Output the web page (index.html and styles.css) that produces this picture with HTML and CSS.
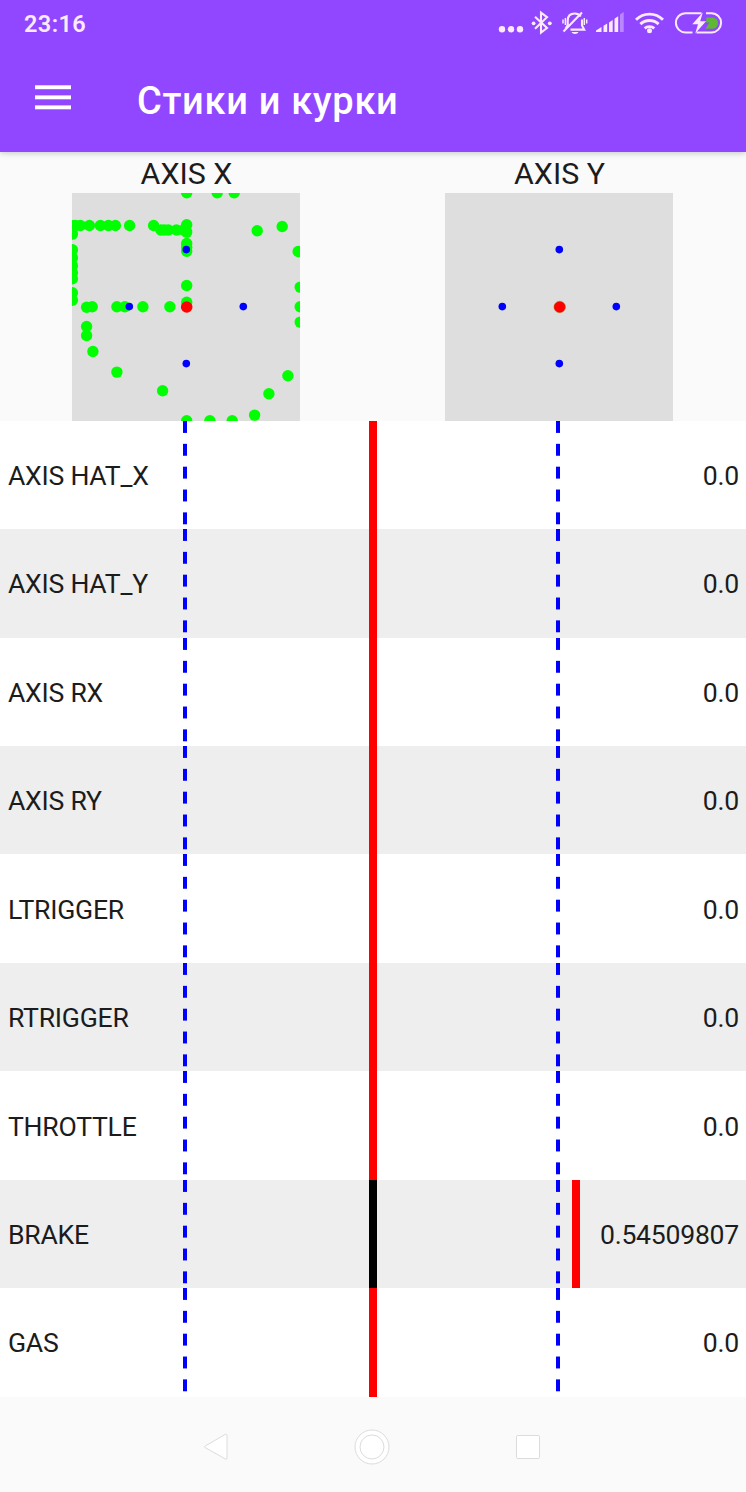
FILE: index.html
```html
<!DOCTYPE html>
<html lang="ru">
<head>
  <meta charset="UTF-8">
  <meta name="viewport" content="width=device-width, initial-scale=1.0">
  <title>Стики и курки</title>
  <link rel="stylesheet" href="styles.css">
</head>
<body>
  <header class="header">
    <div class="status-bar">
      <span class="clock">23:16</span>
      <svg class="status-icons" width="228" height="32" viewBox="496 7 228 32" fill="none" stroke="#fbe9ff">
        <g fill="#fbe9ff" stroke="none">
          <circle cx="502" cy="29.3" r="3.2"/>
          <circle cx="511" cy="29.3" r="3.2"/>
          <circle cx="520" cy="29.3" r="3.2"/>
        </g>
        <!-- bluetooth -->
        <path d="M535 16.7L547 28L541 32.7V12.7L547 17.2L535 28.8" stroke-width="2.1"/>
        <g fill="#fbe9ff" stroke="none">
          <circle cx="533.6" cy="23.3" r="1.9"/>
          <circle cx="549.8" cy="23.3" r="1.9"/>
        </g>
        <!-- muted bell -->
        <path d="M567.7 25V20.5C567.7 16 570.5 13.5 574.7 13.5C577.5 13.5 579.5 14.6 580.8 16.5M582 19.5V25.5L584.2 29.6H570.5M567.7 25L565.5 29M563.5 31.5L582 12.5" stroke-width="2.1"/>
        <path d="M565.4 18V25M563 19.5V23.5M584.3 18V25M586.7 19.5V23.5" stroke-width="1.5"/>
        <path d="M571.5 32H578.5C577.5 34.6 572.5 34.6 571.5 32Z" fill="#fbe9ff" stroke="none"/>
        <!-- mobile signal -->
        <g fill="#fbe9ff" stroke="none">
          <path d="M596 32V30.5L601.5 27V32Z"/>
          <path d="M603.5 32V25.8L607.2 23.5V32Z"/>
          <path d="M609 32V22.5L612.7 20V32Z"/>
          <path d="M614.5 32V18.7L618.2 16.2V32Z"/>
          <path d="M620 32V14.5L623.7 12V32Z" opacity="0.4"/>
        </g>
        <!-- wifi -->
        <g stroke-width="2.9">
          <path d="M636 19.7C643.5 12.2 655.5 12.2 663 19.7"/>
          <path d="M640.4 24.1C645.5 19.2 653.5 19.2 658.6 24.1"/>
          <path d="M644.7 28.4C647.3 26 651.7 26 654.3 28.4"/>
        </g>
        <circle cx="649.5" cy="30.7" r="2.5" fill="#fbe9ff" stroke="none"/>
        <!-- battery, charging -->
        <path d="M692.5 32.4H685.5A9.6 9.6 0 0 1 685.5 13.2H701.5M706 13.2H711.5A9.6 9.6 0 0 1 711.5 32.4H696.5" stroke-width="2"/>
        <path d="M706.5 17.5H713Q718 18.5 718 23Q718 27.5 713 28.8H705.5L709.5 22.5H706Z" fill="#5fb832" stroke="none"/>
        <path d="M702.8 12.5L692.2 24.3H698L695.2 33.5L706 21.2H700.2Z" fill="#fbe9ff" stroke="none"/>
      </svg>
    </div>
    <div class="toolbar">
      <svg class="menu-icon" width="36" height="25" viewBox="0 0 36 25" fill="#fff">
        <rect y="0.3" width="36" height="3.9"/>
        <rect y="10.4" width="36" height="3.9"/>
        <rect y="20.4" width="36" height="3.9"/>
      </svg>
      <h1 class="title">Стики и курки</h1>
    </div>
  </header>

  <main>
    <section class="sticks">
      <div class="stick">
        <h2 class="stick-name">AXIS X</h2>
        <svg class="pad" viewBox="-0.4 0.2 228 228">
          <g id="trail" fill="#00ff00"></g>
          <g fill="#0000ff">
            <circle cx="113.9" cy="56.8" r="3.8"/>
            <circle cx="56.9" cy="113.8" r="3.8"/>
            <circle cx="170.9" cy="113.8" r="3.8"/>
            <circle cx="113.9" cy="170.8" r="3.8"/>
          </g>
          <circle cx="114.3" cy="114.2" r="5.8" fill="#ff0000"/>
        </svg>
      </div>
      <div class="stick">
        <h2 class="stick-name">AXIS Y</h2>
        <svg class="pad" viewBox="-0.4 0.2 228 228">
          <g fill="#0000ff">
            <circle cx="113.9" cy="56.8" r="3.8"/>
            <circle cx="56.9" cy="113.8" r="3.8"/>
            <circle cx="170.9" cy="113.8" r="3.8"/>
            <circle cx="113.9" cy="170.8" r="3.8"/>
          </g>
          <circle cx="114.3" cy="114.2" r="5.8" fill="#ff0000" stroke="#8a7a00" stroke-width="0.4"/>
        </svg>
      </div>
    </section>

    <section class="axes">
      <div class="axis"><span>AXIS HAT_X</span><span>0.0</span><i class="marker"></i></div>
      <div class="axis"><span>AXIS HAT_Y</span><span>0.0</span><i class="marker"></i></div>
      <div class="axis"><span>AXIS RX</span><span>0.0</span><i class="marker"></i></div>
      <div class="axis"><span>AXIS RY</span><span>0.0</span><i class="marker"></i></div>
      <div class="axis"><span>LTRIGGER</span><span>0.0</span><i class="marker"></i></div>
      <div class="axis"><span>RTRIGGER</span><span>0.0</span><i class="marker"></i></div>
      <div class="axis"><span>THROTTLE</span><span>0.0</span><i class="marker"></i></div>
      <div class="axis"><span>BRAKE</span><span>0.54509807</span><i class="marker" style="left: 77.25%"></i></div>
      <div class="axis"><span>GAS</span><span>0.0</span><i class="marker"></i></div>
    </section>
  </main>

  <nav class="nav-bar">
    <svg width="26" height="30" viewBox="0 0 26 30"><path d="M2 14.1L22.5 2.3Q24 1.6 24 3.2V26.2Q24 27.8 22.5 27L2 15.5Q1 14.8 2 14.1Z"/></svg>
    <svg width="36" height="36" viewBox="0 0 36 36"><circle cx="18" cy="18" r="17"/><circle cx="18" cy="18" r="12"/></svg>
    <svg width="26" height="26" viewBox="0 0 26 26"><rect x="1.5" y="1.5" width="23" height="23" rx="1.2"/></svg>
  </nav>

  <script>
    // Recorded stick positions
    const points = [
      [3, 32.7], [8, 32.7], [17, 32.7], [28, 32.7], [36, 32.7], [43, 32.7], [57.2, 32.7], [81.2, 32.7],
      [88.5, 37.2], [92, 37.2], [96, 37.2], [104, 37.2], [111, 37.2],
      [0, 33], [0, 41.3], [0, 57], [0, 65], [0, 73], [0, 80], [0, 86], [0, 100], [0, 107.5],
      [14.2, 114.5], [19.8, 114], [44.5, 114], [52.5, 114], [70.5, 114], [97.5, 114],
      [14.2, 133.7], [14.2, 142.7], [20.5, 158.7], [44.5, 179.3], [90.2, 198],
      [114.3, 0], [144.8, 0], [161.8, 0],
      [114.3, 32], [114.3, 39.3], [114.3, 50.7], [114.3, 54.5], [114.3, 58.5], [114.3, 92.7], [114.3, 109.5],
      [184.8, 38], [209.8, 33.7], [225.8, 58.7], [227.8, 94.3], [227.8, 114], [227.8, 129.3],
      [215.5, 183], [196.5, 201], [182.2, 222.3],
      [114.3, 228], [137.5, 228], [159.8, 228]
    ];

    const trail = document.getElementById('trail');
    points.forEach(function (point) {
      const dot = document.createElementNS('http://www.w3.org/2000/svg', 'circle');
      dot.setAttribute('cx', point[0]);
      dot.setAttribute('cy', point[1]);
      dot.setAttribute('r', 5.7);
      trail.appendChild(dot);
    });
  </script>
</body>
</html>
```
FILE: styles.css
```css
* {
  box-sizing: border-box;
}

body {
  margin: 0;
  height: 1492px;
  display: flex;
  flex-direction: column;
  background: #fafafa;
  color: #1c1c1c;
  font-family: Roboto, sans-serif;
}

/* Header */
.header {
  height: 152px;
  background: #9147ff;
  color: #fff;
  box-shadow: 0 1px 6px rgba(0, 0, 0, 0.22);
}

.status-bar {
  height: 46px;
  padding: 0 22px 0 24px;
  display: flex;
  align-items: center;
  justify-content: space-between;
}

.clock {
  color: #fbe9ff;
  font-size: 23.5px;
  font-weight: 600;
  letter-spacing: 0.4px;
  padding-top: 1px;
}

.toolbar {
  height: 106px;
  padding: 0 35px;
  display: flex;
  align-items: center;
  gap: 66px;
}

.menu-icon {
  margin-bottom: 3px;
}

.title {
  margin: 4px 0 0;
  font-size: 38px;
  font-weight: 500;
  letter-spacing: 0.7px;
}

/* Stick pads */
.sticks {
  height: 268.7px;
  display: grid;
  grid-template-columns: 1fr 1fr;
}

.stick {
  display: flex;
  flex-direction: column;
  align-items: center;
}

.stick-name {
  margin: 0;
  padding-top: 3px;
  height: 40.7px;
  line-height: 38px;
  font-size: 30.4px;
  font-weight: 400;
}

.pad {
  width: 228px;
  height: 228px;
  margin-right: 1px;
  background: #dedede;
  overflow: hidden;
}

/* Axis rows */
.axis {
  position: relative;
  height: 108.45px;
  padding: 1px 7px 0 8px;
  display: flex;
  align-items: center;
  justify-content: space-between;
  font-size: 26.6px;
  letter-spacing: -0.25px;
  background-color: #fff;
  background-image:
    linear-gradient(#0000ff 11.5px, transparent 11.5px),
    linear-gradient(#0000ff 11.5px, transparent 11.5px),
    linear-gradient(#000, #000);
  background-size: 4px 22.85px, 4px 22.85px, 8px 100%;
  background-position: 182.5px 0, 555.5px 0, 369px 0;
  background-repeat: repeat-y;
}

.axis:nth-child(even) {
  background-color: #eee;
}

.marker {
  position: absolute;
  top: 0;
  bottom: 0;
  left: 50%;
  width: 8px;
  margin-left: -4px;
  background: #ff0000;
}

/* Navigation buttons */
.nav-bar {
  flex: 1;
  padding: 5px 205px 0 203px;
  display: flex;
  align-items: center;
  justify-content: space-between;
  fill: #fff;
  stroke: #dcdcdc;
}
```
